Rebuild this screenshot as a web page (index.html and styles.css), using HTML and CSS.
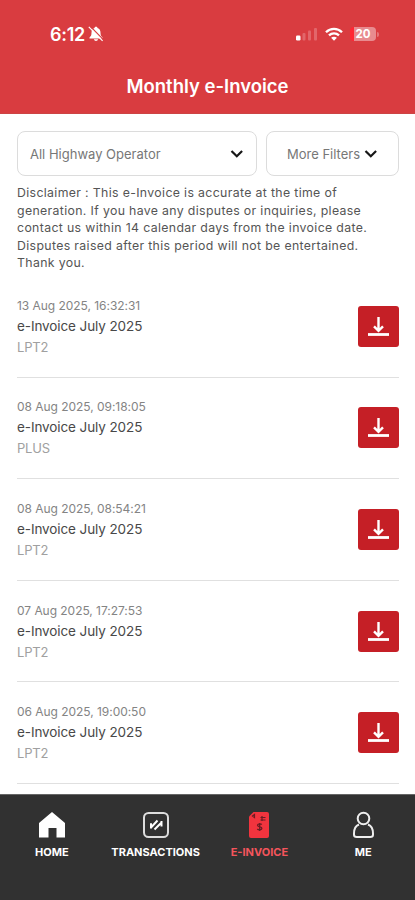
FILE: index.html
```html
<!DOCTYPE html>
<html lang="en">
<head>
<meta charset="utf-8">
<title>Monthly e-Invoice</title>
<link rel="stylesheet" href="styles.css">
</head>
<body>
<svg class="defs" width="0" height="0" aria-hidden="true">
  <symbol id="download" viewBox="0 0 41 41">
    <path d="M20.500 11v13M16 20.300l4.500 4.500 4.500-4.500" fill="none" stroke="#fff" stroke-width="2.400"/>
    <path d="M10 28.500h21" fill="none" stroke="#fff" stroke-width="2.800"/>
  </symbol>
  <symbol id="chevron" viewBox="0 0 14 10"><path d="M1.500 2l5.300 5.200L12.100 2" fill="none" stroke="#171717" stroke-width="2.200"/></symbol>
</svg>
<header class="header">
  <div class="status">
    <div class="clock"><span class="time">6:12</span>
      <svg width="16" height="16" viewBox="0 0 16 16"><path d="M8 .8c-.9 0-1.400.5-1.500 1.200C4.300 2.700 3.500 4.500 3.500 6.800c0 2.600-.7 3.500-2 4.700v.9h13v-.9c-1.300-1.200-2-2.100-2-4.700 0-2.300-.8-4.100-3-4.800C9.400 1.300 8.900.8 8 .8zM5.900 13.300c.3 1.100 1.100 1.700 2.100 1.700s1.800-.6 2.100-1.700z" fill="#fff"/><path d="M2.300.3l13.500 13.900" stroke="#d93c40" stroke-width="1.200"/><path d="M.8.9l13.800 14" stroke="#fff" stroke-width="1.200"/></svg>
    </div>
    <div class="signals">
      <svg width="22" height="14" viewBox="0 0 22 14"><rect x="0" y="8.500" width="4.500" height="5" rx="1.200" fill="#fff"/><g fill="#e2666a"><rect x="6.500" y="6" width="3" height="7.500" rx="1"/><rect x="12" y="3.500" width="3" height="10" rx="1"/><rect x="18" y="1" width="3" height="12.500" rx="1"/></g></svg>
      <svg width="18" height="14" viewBox="0 0 18 14"><g fill="none" stroke="#fff" stroke-width="2.300"><path d="M1 5.200c4.500-4.500 11.500-4.500 16 0"/><path d="M4 8.400c2.900-2.800 7.100-2.800 10 0"/></g><path d="M9 13.800l-2.900-3c1.500-1.400 4.300-1.400 5.800 0z" fill="#fff"/></svg>
      <div class="battery"><span class="level">20</span><i class="tip"></i></div>
    </div>
  </div>
  <h1 class="title">Monthly e-Invoice</h1>
</header>
<main class="main">
  <div class="filters">
    <div class="select operator"><span>All Highway Operator</span><svg width="14" height="10"><use href="#chevron"/></svg></div>
    <div class="select more"><span>More Filters</span><svg width="14" height="10"><use href="#chevron"/></svg></div>
  </div>
  <p class="disclaimer">Disclaimer : This e-Invoice is accurate at the time of<br>generation. If you have any disputes or inquiries, please<br>contact us within 14 calendar days from the invoice date.<br>Disputes raised after this period will not be entertained.<br>Thank you.</p>
  <div class="list">
    <article class="row"><div><p class="date">13 Aug 2025, 16:32:31</p><p class="name">e-Invoice July 2025</p><p class="op">LPT2</p></div><button class="download" aria-label="Download"><svg width="41" height="41"><use href="#download"/></svg></button></article>
    <article class="row"><div><p class="date">08 Aug 2025, 09:18:05</p><p class="name">e-Invoice July 2025</p><p class="op">PLUS</p></div><button class="download" aria-label="Download"><svg width="41" height="41"><use href="#download"/></svg></button></article>
    <article class="row"><div><p class="date">08 Aug 2025, 08:54:21</p><p class="name">e-Invoice July 2025</p><p class="op">LPT2</p></div><button class="download" aria-label="Download"><svg width="41" height="41"><use href="#download"/></svg></button></article>
    <article class="row"><div><p class="date">07 Aug 2025, 17:27:53</p><p class="name">e-Invoice July 2025</p><p class="op">LPT2</p></div><button class="download" aria-label="Download"><svg width="41" height="41"><use href="#download"/></svg></button></article>
    <article class="row"><div><p class="date">06 Aug 2025, 19:00:50</p><p class="name">e-Invoice July 2025</p><p class="op">LPT2</p></div><button class="download" aria-label="Download"><svg width="41" height="41"><use href="#download"/></svg></button></article>
  </div>
</main>
<nav class="nav">
  <a class="tab"><svg width="28" height="28" viewBox="0 0 28 28"><path d="M14 1L27 12v14.500h-8.500V17h-8v9.500H1V12z" fill="#fff"/></svg><span class="home">HOME</span></a>
  <a class="tab"><svg width="28" height="28" viewBox="0 0 28 28"><rect x="2" y="2" width="24" height="24" rx="4.500" fill="none" stroke="#ddd" stroke-width="2"/><path d="M9 17.500v-5.200M9 16.500l6.500-7M12.500 18.500l7-7M19.500 10v5.500" fill="none" stroke="#fff" stroke-width="2"/></svg><span class="transactions">TRANSACTIONS</span></a>
  <a class="tab active"><svg width="28" height="28" viewBox="0 0 28 28"><path d="M8.500 1H22a2 2 0 0 1 2 2v22a2 2 0 0 1-2 2H6a2 2 0 0 1-2-2V5.500z" fill="#f1343e"/><path d="M7.500 5l2-1.500v3zM15.500 6.500h5M15.500 9h5M17 5v5" stroke="#6b1c23" stroke-width="1.200" fill="none"/><path d="M16.800 13.500c-1-1-4.300-1-4.300.8 0 2.200 4.400.8 4.400 3 0 1.900-3.500 1.900-4.600.7M14.700 12v8" stroke="#6b1c23" stroke-width="1.300" fill="none"/></svg><span class="einvoice">E-INVOICE</span></a>
  <a class="tab"><svg width="28" height="28" viewBox="0 0 28 28"><g fill="none" stroke="#eee" stroke-width="2"><circle cx="14.500" cy="7.500" r="5.800"/><path d="M10 13.500C6.500 14.800 5 18.500 5 22.500v1.200c0 1.500 1.200 2.300 2.800 2.300h13.400c1.600 0 2.800-.8 2.800-2.300v-1.200c0-4-1.500-7.700-5-9"/></g></svg><span class="me">ME</span></a>
</nav>
</body>
</html>
```
FILE: styles.css
```css
* { box-sizing: border-box; }
body {
  margin: 0;
  width: 415px;
  height: 900px;
  overflow: hidden;
  display: flex;
  flex-direction: column;
  background: #fff;
  font-family: Inter, "Liberation Sans", sans-serif;
}
p, h1 { margin: 0; white-space: nowrap; }
svg { display: block; flex: none; }
.defs { position: absolute; }
.header { height: 114px; flex: none; background: #d93c40; color: #fff; border-bottom: 1px solid #cc4444; }
.status { height: 68px; padding: 0 36px 0 50px; display: flex; justify-content: space-between; align-items: center; }
.clock, .signals { display: flex; align-items: center; }
.clock { gap: 3px; }
.time { font-size: 18px; font-weight: 600; letter-spacing: -0.3px; }
.signals { gap: 7px; }
.battery { display: flex; align-items: center; gap: 1px; }
.level {
  width: 26px; height: 14px; border-radius: 4px;
  background: linear-gradient(90deg, #ff2634 0 4px, #e88b8f 4px);
  font-size: 11.5px; font-weight: 700; line-height: 14px; text-align: center;
}
.tip { width: 2px; height: 5px; border-radius: 0 2px 2px 0; background: #e67579; }
.title { line-height: 36px; font-size: 18.5px; font-weight: 600; text-align: center; }
.main { flex: 1; min-height: 0; padding: 17px 16px 0 17px; }
.filters { display: flex; gap: 9px; height: 45px; }
.select { display: flex; align-items: center; border: 1px solid #dcdcdc; border-radius: 8px; color: #777; font-size: 13px; white-space: nowrap; }
.operator { width: 240px; justify-content: space-between; padding: 0 12px; }
.more { flex: 1; justify-content: center; gap: 4px; }
.disclaimer { margin-top: 8px; height: 92px; font-size: 12.3px; letter-spacing: 0.35px; line-height: 17.6px; color: #555; }
.row { height: 101.6px; display: flex; align-items: center; justify-content: space-between; border-bottom: 1.5px solid #e0e0e0; }
.row p { line-height: 21px; }
.date { font-size: 12px; color: #848484; letter-spacing: -0.04px; }
.row .name { font-size: 13.5px; letter-spacing: -0.1px; color: #484848; }
.op { font-size: 13px; letter-spacing: -0.2px; color: #a0a0a0; }
.download { width: 41px; height: 41px; padding: 0; border: 0; border-radius: 3px; background: #c51f26; }
.nav { height: 106px; flex: none; display: flex; background: #313131; border-top: 1px solid #666; padding-top: 16px; }
.tab { flex: 1; display: flex; flex-direction: column; align-items: center; gap: 5px; color: #fff; font-size: 11px; font-weight: 700; line-height: 16px; }
.active { color: #f4555c; }
```
